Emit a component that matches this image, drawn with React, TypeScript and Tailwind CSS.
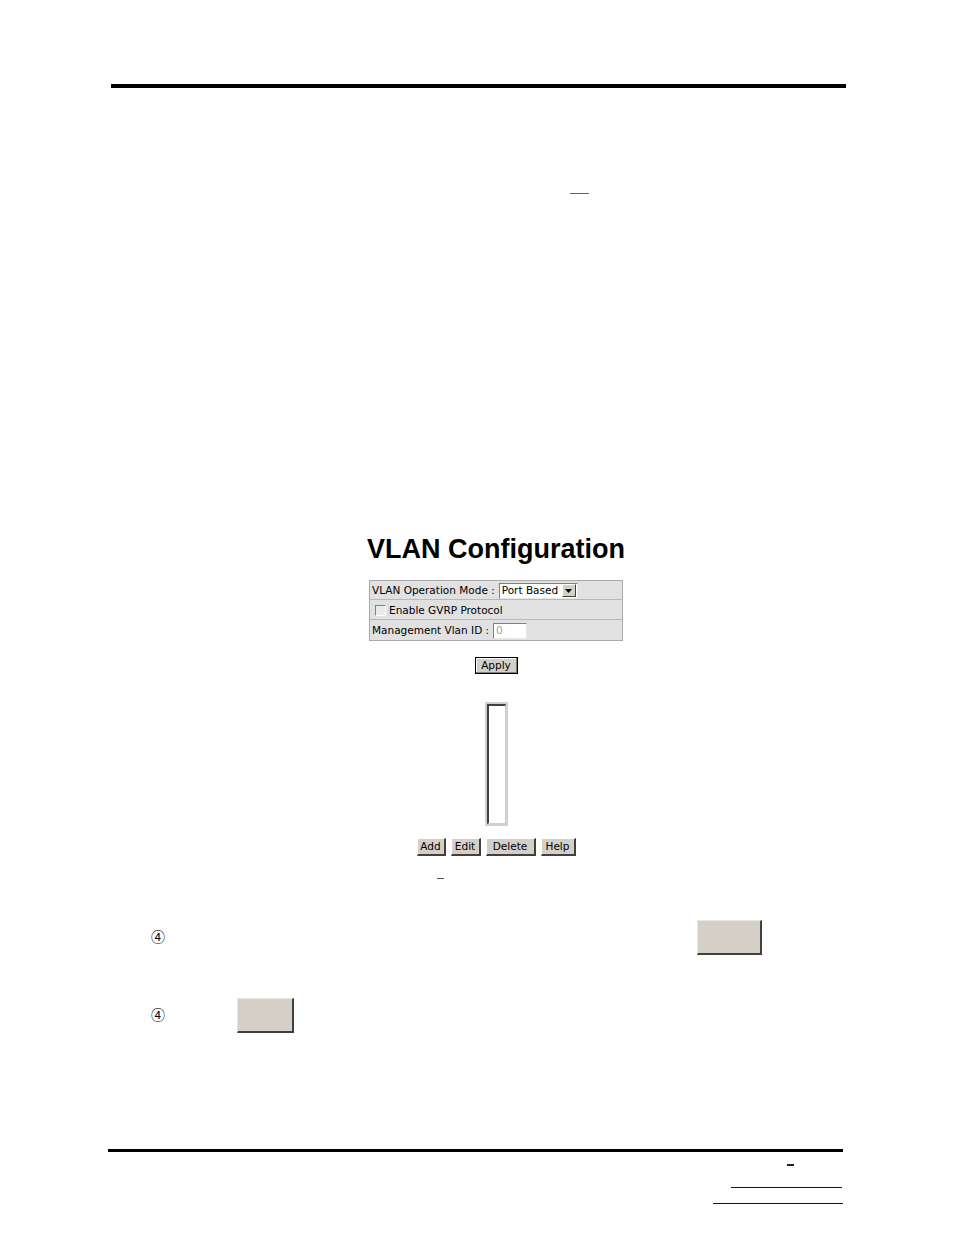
import React from "react";

const ui = "font-['DejaVu_Sans',sans-serif] text-[10.5px] leading-none text-black";
const circled = "mb-[3px] font-['Noto_Sans_CJK_JP','DejaVu_Sans',sans-serif] text-[14px] leading-none text-black";

function WinButton({ label, w }: { label: string; w: string }) {
  return (
    <div
      className={`${w} h-[18px] flex items-center justify-center bg-[#d4d0c8] border-t border-l border-white border-r-2 border-b-2 border-r-[#404040] border-b-[#404040] ${ui}`}
    >
      {label}
    </div>
  );
}

function GrayBox({ w }: { w: string }) {
  return (
    <div
      className={`${w} h-[35px] bg-[#d4d0c8] border-t border-l border-[#e8e6e0] border-r-2 border-b-2 border-r-[#404040] border-b-[#404040]`}
    />
  );
}

export default function App() {
  return (
    <div className="w-[954px] h-[1235px] bg-white pt-[84px] font-['Liberation_Sans',Arial,sans-serif]">
      {/* header rule */}
      <div className="ml-[111px] w-[735px] h-[4px] bg-black" />
      <div className="ml-[570px] mt-[105px] w-[19px] h-px bg-[#666]" />

      {/* screenshot of web UI */}
      <div className="ml-[365px] w-[262px] mt-[339px] flex flex-col items-center">
        <h1 className="text-[27px] leading-[32px] font-bold text-black whitespace-nowrap">
          VLAN Configuration
        </h1>

        <div className={`mt-[15px] w-[254px] bg-[#e1e1e1] border border-[#a9a9a9] ${ui}`}>
          <div className="h-[19px] flex items-center pl-[2px] pt-px border-b border-[#b8b8b8]">
            <span>VLAN Operation Mode :</span>
            <div className="ml-[4px] w-[79px] h-[16px] bg-white border border-t-[#808080] border-l-[#808080] border-r-[#e8e8e8] border-b-[#e8e8e8] flex items-center">
              <span className="pl-[2px] flex-1">Port Based</span>
              <div className="w-[14px] h-[13px] mr-px bg-[#d4d0c8] border-t border-l border-white border-r border-b border-r-[#404040] border-b-[#404040] flex items-center justify-center">
                <svg width="7" height="4" viewBox="0 0 7 4">
                  <path d="M0 0h7L3.5 4z" fill="#000" />
                </svg>
              </div>
            </div>
          </div>
          <div className="h-[20px] flex items-center pl-[5px] pt-px border-b border-[#b8b8b8]">
            <div className="w-[11px] h-[11px] bg-[#ecebe6] border border-t-[#808080] border-l-[#808080] border-r-white border-b-white" />
            <span className="ml-[3px]">Enable GVRP Protocol</span>
          </div>
          <div className="h-[20px] flex items-center pl-[2px] pt-px">
            <span>Management Vlan ID :</span>
            <div className="ml-[4px] w-[34px] h-[16px] bg-white border border-t-[#808080] border-l-[#808080] border-r-[#e8e8e8] border-b-[#e8e8e8] flex items-center pl-[2px] text-[#a0a0a0]">
              0
            </div>
          </div>
        </div>

        <div className={`mt-[16px] w-[43px] h-[17px] flex items-center justify-center bg-[#d4d0c8] border border-black shadow-[inset_-1px_-1px_0_#808080,inset_1px_1px_0_#fff] ${ui}`}>
          Apply
        </div>

        <div className="mt-[28px] w-[23px] h-[124px] border-2 border-[#d4d0c8] bg-white">
          <div className="w-full h-full border-t-2 border-l-2 border-[#404040] border-r border-b border-r-[#d4d0c8] border-b-[#d4d0c8]" />
        </div>

        <div className="mt-[12px] flex gap-[5px]">
          <WinButton label="Add" w="w-[29px]" />
          <WinButton label="Edit" w="w-[30px]" />
          <WinButton label="Delete" w="w-[50px]" />
          <WinButton label="Help" w="w-[35px]" />
        </div>

        <div className="self-start ml-[72px] mt-[22px] w-[7px] h-px bg-[#555]" />
      </div>

      {/* steps */}
      <div className="mt-[41px] ml-[151px] w-[611px] h-[35px] flex items-center justify-between">
        <span className={circled}>④</span>
        <GrayBox w="w-[65px]" />
      </div>
      <div className="mt-[43px] ml-[151px] h-[35px] flex items-center">
        <span className={circled}>④</span>
        <div className="ml-[72px]">
          <GrayBox w="w-[57px]" />
        </div>
      </div>

      {/* footer */}
      <div className="mt-[116px] ml-[108px] w-[735px] h-[3px] bg-black" />
      <div className="ml-[787px] mt-[12px] w-[7px] h-[2px] bg-[#222]" />
      <div className="ml-[731px] mt-[21px] w-[111px] h-px bg-[#0000cc]" />
      <div className="ml-[713px] mt-[15px] w-[130px] h-px bg-[#0000cc]" />
    </div>
  );
}
